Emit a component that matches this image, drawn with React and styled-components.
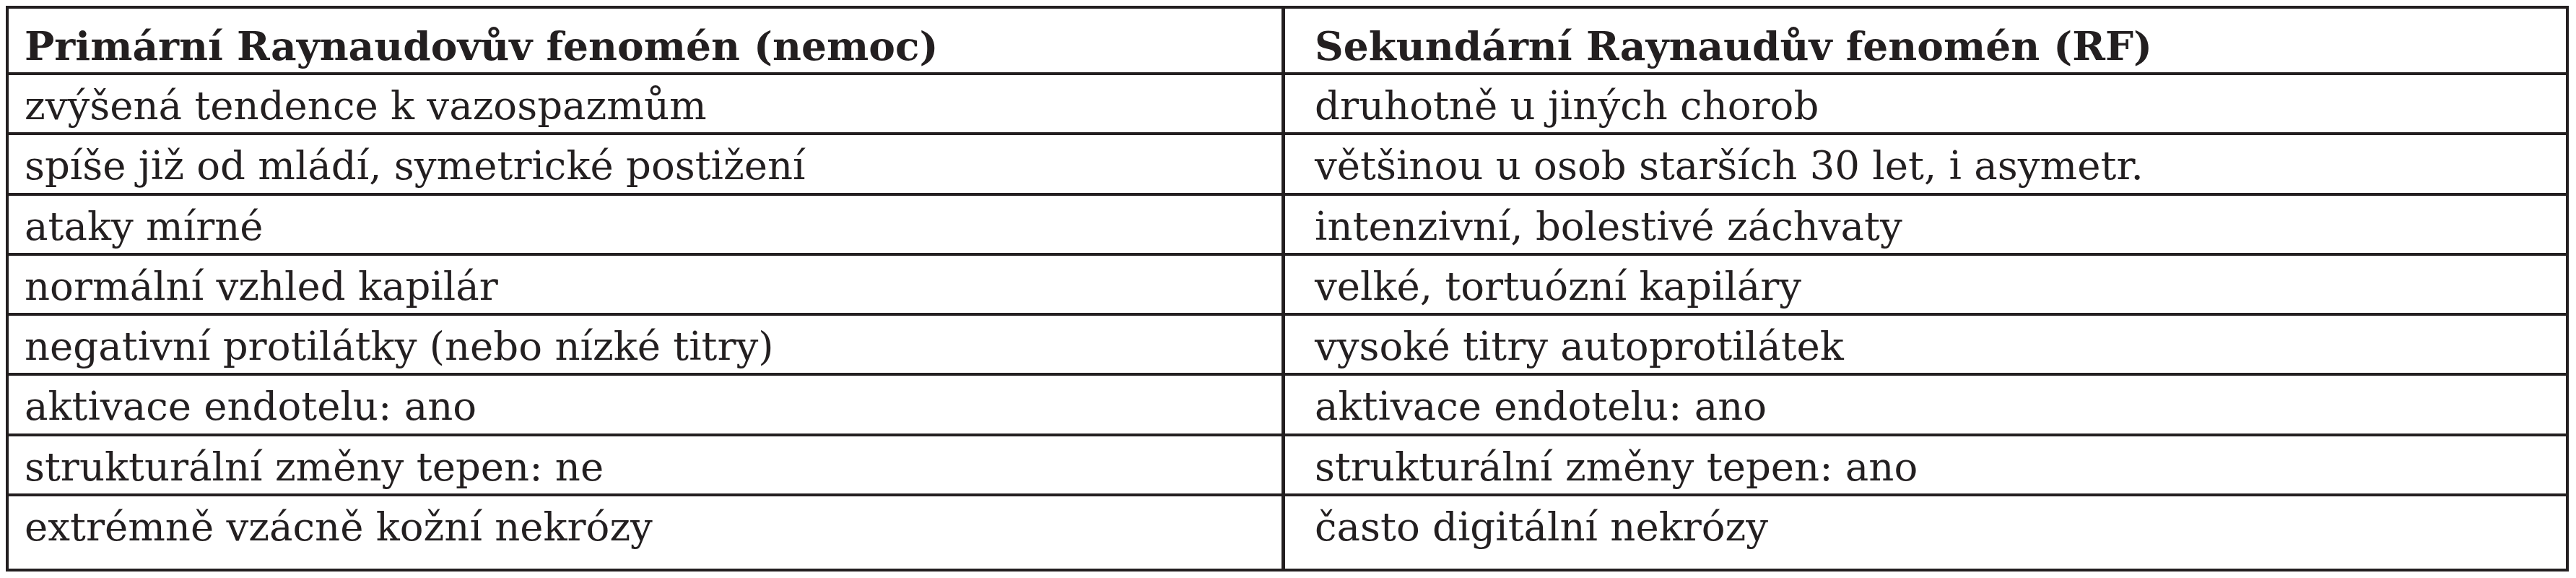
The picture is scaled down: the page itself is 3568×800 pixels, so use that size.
import React from "react";
import styled, { createGlobalStyle } from "styled-components";

const Global = createGlobalStyle`
  html, body { margin: 0; padding: 0; background: #ffffff; }
  body { font-family: "DejaVu Serif", "Liberation Serif", serif; color: #231f20; }
`;

const Page = styled.div`
  padding: 8px 10px 8px 8px;
`;

const Table = styled.div`
  width: 3550px;
  box-sizing: border-box;
  border: 4px solid #231f20;
  display: flex;
  flex-direction: column;
`;

const Row = styled.div`
  display: grid;
  grid-template-columns: 1768px 1fr;
  box-sizing: border-box;
  height: ${(p) => p.$h}px;
  border-bottom: ${(p) => (p.$last ? "none" : "4px solid #231f20")};
`;

const Cell = styled.div`
  box-sizing: border-box;
  border-right: ${(p) => (p.$first ? "5px solid #231f20" : "none")};
  padding-left: ${(p) => (p.$first ? 22 : 41)}px;
  padding-top: ${(p) => (p.$head ? 24 : 15)}px;
  font-family: "DejaVu Serif", "Liberation Serif", serif;
  font-weight: ${(p) => (p.$head ? 700 : 400)};
  font-size: ${(p) => (p.$head ? 55 : 54.5)}px;
  line-height: ${(p) => (p.$head ? 55 : 54.5)}px;
  white-space: nowrap;
  color: #231f20;
`;

const header = [
  "Primární Raynaudovův fenomén (nemoc)",
  "Sekundární Raynaudův fenomén (RF)",
];

const rows = [
  ["zvýšená tendence k vazospazmům", "druhotně u jiných chorob"],
  ["spíše již od mládí, symetrické postižení", "většinou u osob starších 30 let, i asymetr."],
  ["ataky mírné", "intenzivní, bolestivé záchvaty"],
  ["normální vzhled kapilár", "velké, tortuózní kapiláry"],
  ["negativní protilátky (nebo nízké titry)", "vysoké titry autoprotilátek"],
  ["aktivace endotelu: ano", "aktivace endotelu: ano"],
  ["strukturální změny tepen: ne", "strukturální změny tepen: ano"],
  ["extrémně vzácně kožní nekrózy", "často digitální nekrózy"],
];

export default function App() {
  return (
    <>
      <Global />
      <Page>
        <Table>
          <Row $h={92}>
            <Cell $first $head>{header[0]}</Cell>
            <Cell $head>{header[1]}</Cell>
          </Row>
          {rows.map((r, i) => {
            const last = i === rows.length - 1;
            return (
              <Row key={i} $h={last ? 100 : 83.3} $last={last}>
                <Cell $first>{r[0]}</Cell>
                <Cell>{r[1]}</Cell>
              </Row>
            );
          })}
        </Table>
      </Page>
    </>
  );
}
